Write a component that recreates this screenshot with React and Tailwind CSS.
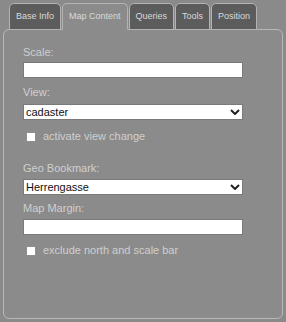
import React from 'react';

const tabs = ['Base Info', 'Map Content', 'Queries', 'Tools', 'Position'];

const Label = ({ children, className = '' }) => (
  <div className={`text-[11px] leading-[13px] text-[#cfcfcf] ${className}`}>{children}</div>
);

const Chevron = () => (
  <svg className="absolute right-[3px] top-[5px] pointer-events-none" width="10" height="6" viewBox="0 0 10 6">
    <path d="M1 1 L5 5 L9 1" fill="none" stroke="#222" strokeWidth="2" />
  </svg>
);

const Select = ({ value, className = '' }) => (
  <div className={`relative w-[220px] ${className}`}>
    <select
      defaultValue={value}
      className="block w-full h-[16px] appearance-none bg-white border border-[#7a7a7a] pl-[2px] text-[11px] leading-[14px] text-[#111] outline-none"
    >
      <option>{value}</option>
    </select>
    <Chevron />
  </div>
);

const Check = ({ label, className = '' }) => (
  <label className={`flex items-center ${className}`}>
    <input
      type="checkbox"
      className="ml-[3px] w-[10px] h-[10px] appearance-none bg-white border border-[#8f8f8f]"
    />
    <span className="ml-[7px] text-[11px] leading-[13px] text-[#cfcfcf]">{label}</span>
  </label>
);

export default function App() {
  return (
    <div className="w-[286px] h-[322px] bg-[#8a8a8a] font-['Liberation_Sans',Arial,sans-serif] pt-[3px]">
      {/* Tabs */}
      <div className="flex gap-[1px] pl-[9px] relative z-10 -mb-px">
        {tabs.map((t) => {
          const active = t === 'Map Content';
          return (
            <div
              key={t}
              className={`h-[27px] px-[6px] flex items-center border border-[#b3b3b3] rounded-t-[5px] text-[9px] text-[#dadada] ${
                active ? 'bg-[#8b8b8b] border-b-[#8b8b8b]' : 'bg-[#5c5c5c]'
              }`}
            >
              {t}
            </div>
          );
        })}
      </div>

      {/* Panel */}
      <div className="mx-[3px] h-[290px] bg-[#8b8b8b] border border-[#b8b8b8] rounded-[6px] pl-[19px] pt-[16px] flex flex-col">
        <Label>Scale:</Label>
        <input className="mt-[3px] w-[220px] h-[16px] bg-white border border-[#7a7a7a] outline-none" />

        <Label className="mt-[8px]">View:</Label>
        <Select value="cadaster" className="mt-[5px]" />
        <Check label="activate view change" className="mt-[10px]" />

        <Label className="mt-[19px]">Geo Bookmark:</Label>
        <Select value="Herrengasse" className="mt-[4px]" />

        <Label className="mt-[7px]">Map Margin:</Label>
        <input className="mt-[4px] w-[220px] h-[16px] bg-white border border-[#7a7a7a] outline-none" />
        <Check label="exclude north and scale bar" className="mt-[9px]" />
      </div>
    </div>
  );
}
